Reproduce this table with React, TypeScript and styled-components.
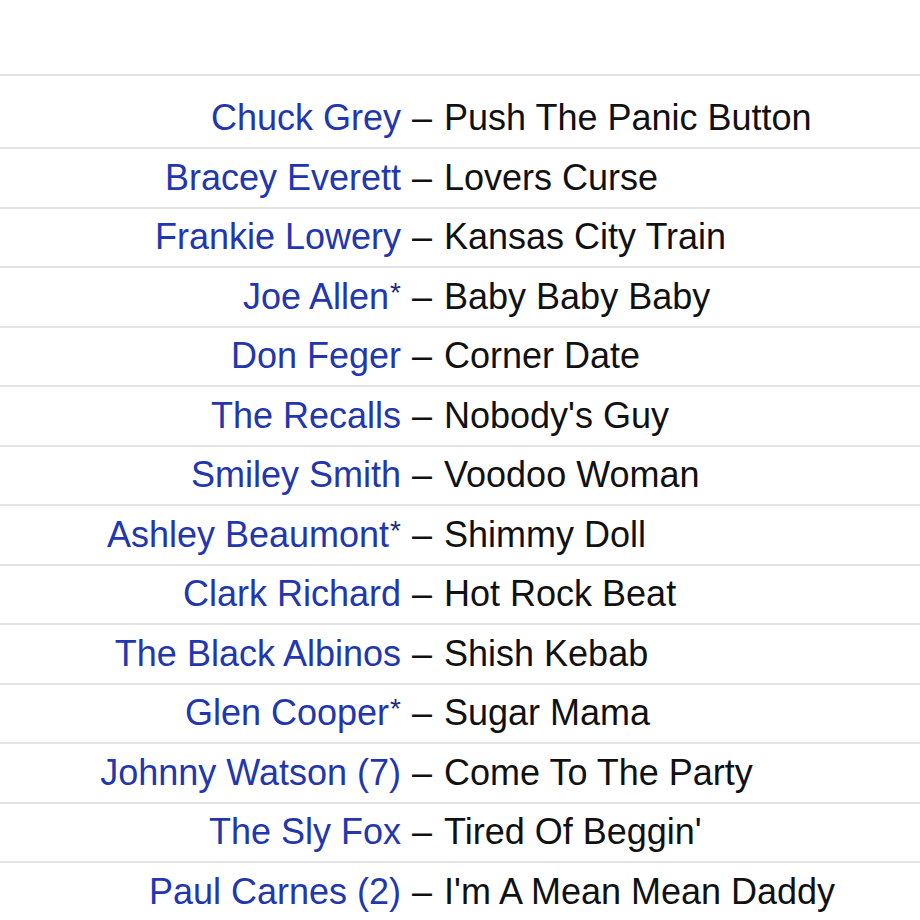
import React from "react";
import styled, { createGlobalStyle } from "styled-components";

const GlobalStyle = createGlobalStyle`
  html, body {
    margin: 0;
    padding: 0;
    background: #ffffff;
  }
  body {
    font-family: "Liberation Sans", Arial, Helvetica, sans-serif;
  }
`;

interface Track {
  artist: string;
  mark?: string;
  title: string;
}

const tracks: Track[] = [
  { artist: "Chuck Grey", title: "Push The Panic Button" },
  { artist: "Bracey Everett", title: "Lovers Curse" },
  { artist: "Frankie Lowery", title: "Kansas City Train" },
  { artist: "Joe Allen", mark: "*", title: "Baby Baby Baby" },
  { artist: "Don Feger", title: "Corner Date" },
  { artist: "The Recalls", title: "Nobody's Guy" },
  { artist: "Smiley Smith", title: "Voodoo Woman" },
  { artist: "Ashley Beaumont", mark: "*", title: "Shimmy Doll" },
  { artist: "Clark Richard", title: "Hot Rock Beat" },
  { artist: "The Black Albinos", title: "Shish Kebab" },
  { artist: "Glen Cooper", mark: "*", title: "Sugar Mama" },
  { artist: "Johnny Watson (7)", title: "Come To The Party" },
  { artist: "The Sly Fox", title: "Tired Of Beggin'" },
  { artist: "Paul Carnes (2)", title: "I'm A Mean Mean Daddy" },
];

export default function App() {
  return (
    <>
      <GlobalStyle />
      <Page>
        <TrackList>
          {tracks.map((t, i) => (
            <Row key={t.artist} $first={i === 0}>
              <Artist>
                {t.artist}
                {t.mark && <Mark>{t.mark}</Mark>}
              </Artist>
              <Title>
                <Dash>–</Dash>
                {t.title}
              </Title>
            </Row>
          ))}
        </TrackList>
      </Page>
    </>
  );
}

const Page = styled.div`
  width: 920px;
  height: 920px;
  overflow: hidden;
  padding-top: 74px;
  box-sizing: border-box;
`;

const TrackList = styled.div`
  border-top: 2px solid #e4e4e4;
`;

const Row = styled.div<{ $first?: boolean }>`
  display: grid;
  grid-template-columns: 401px 1fr;
  align-items: center;
  height: ${(p) => (p.$first ? "73px" : "59.5px")};
  padding-top: ${(p) => (p.$first ? "13px" : "0")};
  box-sizing: border-box;
  border-bottom: 2px solid #e4e4e4;
  font-size: 36px;
  line-height: 40px;
  white-space: nowrap;
`;

const Artist = styled.div`
  text-align: right;
  color: #2236ad;
`;

const Mark = styled.span`
  color: #1a2a80;
  font-size: 28px;
  line-height: 0;
  vertical-align: 7px;
  margin-left: 1px;
`;

const Title = styled.div`
  color: #111111;
  padding-left: 11px;
`;

const Dash = styled.span`
  display: inline-block;
  margin-right: 12px;
`;
